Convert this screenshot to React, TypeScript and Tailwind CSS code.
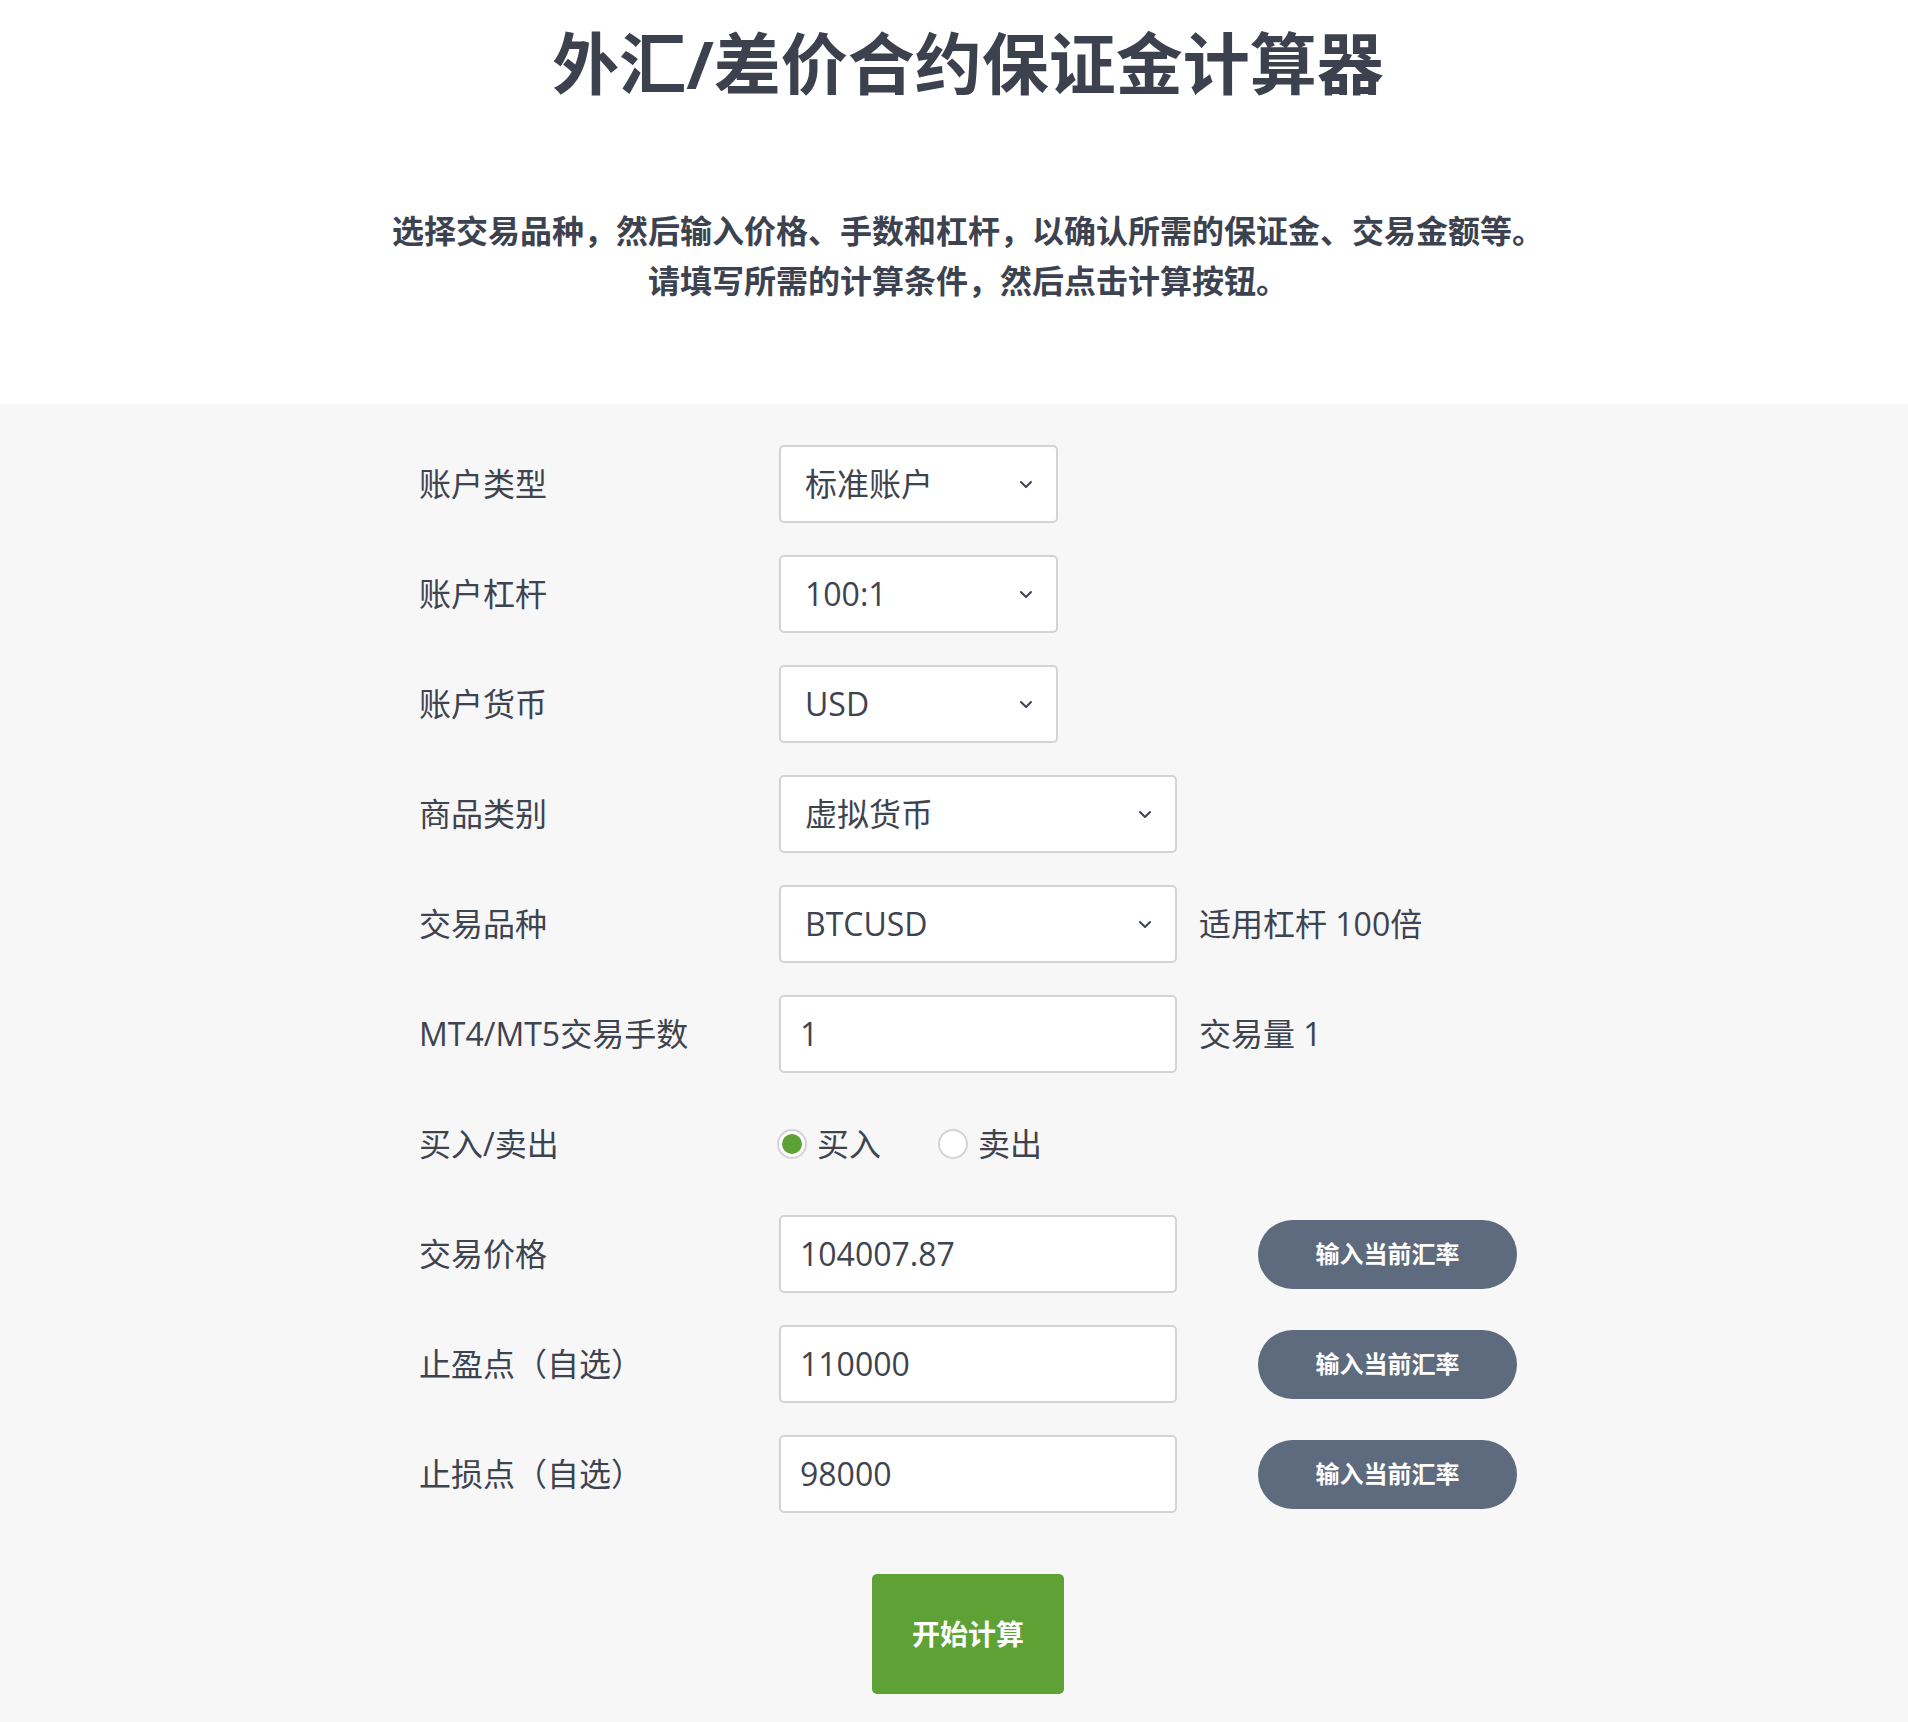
import React from "react";

const FONT = { fontFamily: '"Open Sans", "Noto Sans CJK SC", sans-serif' };

function Chevron() {
  return (
    <svg width="14" height="9" viewBox="0 0 14 9" fill="none" className="shrink-0">
      <path d="M2 2l5 5 5-5" stroke="#3e4350" strokeWidth="2" strokeLinecap="round" strokeLinejoin="round" />
    </svg>
  );
}

function SelectBox({ value, wide }: { value: string; wide?: boolean }) {
  return (
    <div
      className={`${wide ? "w-[398px]" : "w-[279px]"} h-[78px] bg-white border-2 border-[#d3d3d3] rounded-[5px] flex items-center justify-between pl-[24px] pr-[23px] shrink-0`}
    >
      <span>{value}</span>
      <Chevron />
    </div>
  );
}

function TextBox({ value }: { value: string }) {
  return (
    <div className="w-[398px] h-[78px] bg-white border-2 border-[#d3d3d3] rounded-[5px] flex items-center pl-[19px] shrink-0">
      <span>{value}</span>
    </div>
  );
}

function RateButton() {
  return (
    <button className="ml-[81px] w-[260px] h-[69px] rounded-full bg-[#5e6a7e] text-white text-[24px] font-semibold flex items-center justify-center">
      输入当前汇率
    </button>
  );
}

function Radio({ checked, label }: { checked?: boolean; label: string }) {
  return (
    <div className="flex items-center gap-[10px]">
      <span className="w-[30px] h-[30px] rounded-full border-2 border-[#d3d3d3] bg-white flex items-center justify-center">
        {checked && <span className="w-[20px] h-[20px] rounded-full bg-[#5ea135]" />}
      </span>
      <span>{label}</span>
    </div>
  );
}

function Row({ label, children }: { label: string; children: React.ReactNode }) {
  return (
    <div className="flex items-center h-[78px]">
      <div className="w-[360px] shrink-0">{label}</div>
      {children}
    </div>
  );
}

export default function App() {
  return (
    <div className="min-h-[1722px] bg-[#f7f7f7] text-[#3e4350]" style={FONT}>
      {/* Header */}
      <div className="bg-white pt-[16px] pb-[98px]">
        <div className="w-[1140px] mx-auto pl-[35px] pr-[7px] flex flex-col items-center text-center">
          <h1 className="text-[67px] leading-[94px] font-bold text-[#3c414d] whitespace-nowrap">外汇/差价合约保证金计算器</h1>
          <p className="mt-[96px] text-[32px] leading-[50px] font-semibold text-[#3d4250] whitespace-nowrap">
            选择交易品种，然后输入价格、手数和杠杆，以确认所需的保证金、交易金额等。
            <br />
            请填写所需的计算条件，然后点击计算按钮。
          </p>
        </div>
      </div>

      {/* Form */}
      <div className="w-[1140px] mx-auto pl-[35px] pr-[7px] pt-[41px] text-[32px]">
        <div className="flex flex-col gap-[32px]">
          <Row label="账户类型">
            <SelectBox value="标准账户" />
          </Row>
          <Row label="账户杠杆">
            <SelectBox value="100:1" />
          </Row>
          <Row label="账户货币">
            <SelectBox value="USD" />
          </Row>
          <Row label="商品类别">
            <SelectBox value="虚拟货币" wide />
          </Row>
          <Row label="交易品种">
            <SelectBox value="BTCUSD" wide />
            <span className="ml-[22px]">适用杠杆 100倍</span>
          </Row>
          <Row label="MT4/MT5交易手数">
            <TextBox value="1" />
            <span className="ml-[22px]">交易量 1</span>
          </Row>
          <Row label="买入/卖出">
            <div className="flex items-center gap-[57px] -ml-[2px]">
              <Radio checked label="买入" />
              <Radio label="卖出" />
            </div>
          </Row>
          <Row label="交易价格">
            <TextBox value="104007.87" />
            <RateButton />
          </Row>
          <Row label="止盈点（自选）">
            <TextBox value="110000" />
            <RateButton />
          </Row>
          <Row label="止损点（自选）">
            <TextBox value="98000" />
            <RateButton />
          </Row>
        </div>

        <div className="flex justify-center mt-[61px]">
          <button className="w-[192px] h-[120px] rounded-[5px] bg-[#5ea135] text-white text-[28px] font-semibold">
            开始计算
          </button>
        </div>
      </div>
    </div>
  );
}
